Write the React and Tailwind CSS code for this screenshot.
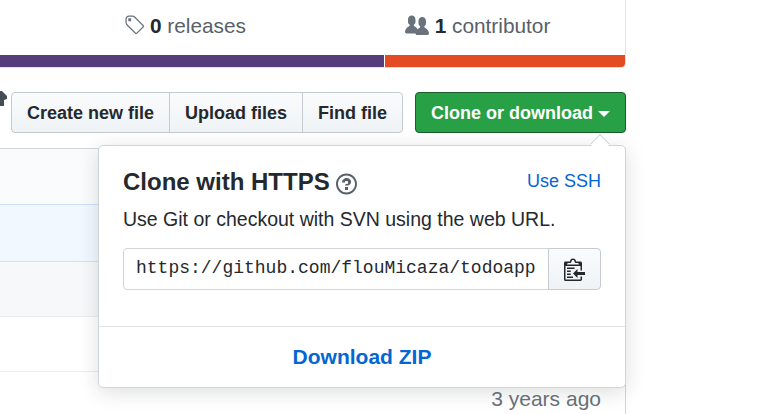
const Tag = ({ className }) => (
  <svg viewBox="0 0 14 16" className={className} fill="currentColor">
    <path fillRule="evenodd" d="M7.73 1.73C7.26 1.26 6.62 1 5.96 1H3.5C2.13 1 1 2.13 1 3.5v2.47c0 .66.27 1.3.73 1.77l6.06 6.06c.39.39 1.02.39 1.41 0l4.59-4.59a.996.996 0 0 0 0-1.41L7.73 1.73zM2.38 7.09c-.31-.3-.47-.7-.47-1.13V3.5c0-.88.72-1.59 1.59-1.59h2.47c.42 0 .83.16 1.13.47l6.14 6.13-4.73 4.73-6.13-6.15zM3.01 3h2v2H3V3h.01z" />
  </svg>
);

const Organization = ({ className }) => (
  <svg viewBox="0 0 16 16" className={className} fill="currentColor">
    <path fillRule="evenodd" d="M16 12.999c0 .439-.45 1-1 1H7.995c-.539 0-.994-.447-.995-.999H1c-.54 0-1-.561-1-1 0-2.634 3-4 3-4s.229-.409 0-1c-.841-.621-1.058-.59-1-3 .058-2.419 1.367-3 2.5-3s2.442.58 2.5 3c.058 2.41-.159 2.379-1 3-.229.59 0 1 0 1s1.549.711 2.42 2.088C9.196 9.369 10 8.999 10 8.999s.229-.409 0-1c-.841-.62-1.058-.59-1-3 .058-2.419 1.367-3 2.5-3s2.437.581 2.495 3c.059 2.41-.158 2.38-1 3-.229.59 0 1 0 1s3.005 1.366 3.005 4z" />
  </svg>
);

const Question = ({ className }) => (
  <svg viewBox="0 0 14 16" className={className} fill="currentColor">
    <path fillRule="evenodd" d="M6 10h2v2H6v-2zm4-3.5C10 8.64 8 9 8 9H6c0-.55.45-1 1-1h.5c.28 0 .5-.22.5-.5v-1c0-.28-.22-.5-.5-.5h-1c-.28 0-.5.22-.5.5V7H4c0-1.5 1.5-3 3-3s3 1 3 2.5zM7 2.3c3.14 0 5.7 2.56 5.7 5.7s-2.56 5.7-5.7 5.7A5.71 5.71 0 0 1 1.3 8c0-3.14 2.56-5.7 5.7-5.7zM7 1C3.14 1 0 4.14 0 8s3.14 7 7 7 7-3.14 7-7-3.14-7-7-7z" />
  </svg>
);

const Clippy = ({ className }) => (
  <svg viewBox="0 0 14 16" className={className} fill="currentColor">
    <path fillRule="evenodd" d="M2 13h4v1H2v-1zm5-6H2v1h5V7zm2 3V8l-3 3 3 3v-2h5v-2H9zM4.5 9H2v1h2.5V9zM2 12h2.5v-1H2v1zm9 1h1v2c-.02.28-.11.52-.3.7-.19.18-.42.28-.7.3H1c-.55 0-1-.45-1-1V4c0-.55.45-1 1-1h3c0-1.11.89-2 2-2 1.11 0 2 .89 2 2h3c.55 0 1 .45 1 1v5h-1V6H1v9h10v-2zM2 5h8c0-.55-.45-1-1-1H8c-.55 0-1-.45-1-1s-.45-1-1-1-1 .45-1 1-.45 1-1 1H3c-.55 0-1 .45-1 1z" />
  </svg>
);

const rows = [
  { cls: 'h-[56px] bg-[#fafbfc] border-t-[#d1d5da] border-r-[#d1d5da]' },
  { cls: 'h-[57px] bg-[#f1f8ff] border-t-[#c8e1ff] border-r-[#c8e1ff]' },
  { cls: 'h-[55px] bg-[#f6f8fa] border-t-[#c8e1ff] border-r-[#d1d5da]' },
  { cls: 'h-[55px] bg-white border-t-[#eaecef] border-r-[#d1d5da]' },
];

export default function App() {
  return (
    <div className="relative h-[414px] w-[766px] overflow-hidden bg-white font-['Liberation_Sans',sans-serif] text-[18px] text-[#24292e]">
      <div className="w-[626px]">
        {/* stats */}
        <div className="overflow-hidden rounded-br-[5px] border-r border-b border-[#e1e4e8]">
          <div className="flex h-[55px] items-center pb-[4px] text-[20.8px] text-[#586069]">
            <div className="flex w-[370px] items-center justify-center gap-[6px]">
              <Tag className="h-[23px] w-[20px] text-[#6a737d]" />
              <span><b className="text-[#24292e]">0</b> releases</span>
            </div>
            <div className="flex flex-1 items-center justify-center gap-[6px] pr-[40px]">
              <Organization className="h-[24px] w-[24px] text-[#6a737d]" />
              <span><b className="text-[#24292e]">1</b> contributor</span>
            </div>
          </div>
          <div className="flex h-[12px] gap-[1px]">
            <div className="w-[384px] bg-[#563d7c]" />
            <div className="flex-1 bg-[#e44b23]" />
          </div>
        </div>

        {/* toolbar */}
        <div className="mt-[24px] flex h-[41px] justify-end">
          <div className="flex font-bold">
            <div className="flex w-[159px] items-center justify-center rounded-l-[4px] border border-[#c6cbd1] bg-linear-to-b from-[#fafbfc] to-[#eff3f6] pt-[2px]">Create new file</div>
            <div className="-ml-px flex w-[134px] items-center justify-center border border-[#c6cbd1] bg-linear-to-b from-[#fafbfc] to-[#eff3f6] pt-[2px]">Upload files</div>
            <div className="-ml-px flex w-[101px] items-center justify-center rounded-r-[4px] border border-[#c6cbd1] bg-linear-to-b from-[#fafbfc] to-[#eff3f6] pt-[2px]">Find file</div>
          </div>
          <div className="ml-[12px] flex w-[211px] items-center justify-center gap-[5px] rounded-[4px] border border-[#1b5c2e] bg-[#28a045] pt-[2px] font-bold text-white">
            Clone or download
            <span className="mt-[1px] h-0 w-0 border-x-[6px] border-t-[6px] border-x-transparent border-t-white" />
          </div>
        </div>

        {/* file rows */}
        <div className="mt-[15px]">
          {rows.map((row, i) => (
            <div key={i} className={`border-t border-r ${row.cls}`} />
          ))}
          <div className="flex h-[60px] justify-end border-t border-r border-t-[#eaecef] border-r-[#d1d5da] pr-[24px] pt-[11px] text-[21px] text-[#6a737d]">3 years ago</div>
        </div>
      </div>

      {/* marker cut off by the left edge */}
      <svg viewBox="0 0 8 18" className="absolute left-0 top-[90px] h-[18px] w-[8px] text-[#444d56]" fill="currentColor">
        <path d="M0 1 L2 1 L7 6 L7 9 L4 10 L4 16 L0 16 Z" />
      </svg>

      {/* clone popover */}
      <div className="absolute left-[98px] top-[145px] h-[243px] w-[528px] rounded-[5px] border border-[#d1d5da] bg-white shadow-[0_4px_20px_rgba(27,31,35,0.15)]">
        <span className="absolute -top-[9px] right-[18px] h-[14px] w-[14px] rotate-45 border-l border-t border-[#d1d5da] bg-white" />
        <div className="relative px-[24px] pt-[21px]">
          <div className="flex items-start justify-between">
            <div className="flex items-center gap-[6px]">
              <h3 className="text-[24px] leading-[30px] font-bold">Clone with HTTPS</h3>
              <Question className="mt-[3px] h-[24px] w-[21px] text-[#586069]" />
            </div>
            <a className="mt-[1px] text-[#0366d6]">Use SSH</a>
          </div>
          <p className="mt-[10px] text-[19.5px] leading-[25px]">Use Git or checkout with SVN using the web URL.</p>
          <div className="mt-[16px] flex h-[42px]">
            <div className="flex flex-1 items-center rounded-l-[4px] border border-[#d1d5da] pb-[2px] pl-[12px] font-['Liberation_Mono',monospace] text-[18px]">
              https://github.com/flouMicaza/todoapp
            </div>
            <div className="-ml-px flex w-[53px] items-center justify-center rounded-r-[4px] border border-[#c6cbd1] bg-linear-to-b from-[#fafbfc] to-[#eff3f6]">
              <Clippy className="h-[24px] w-[21px] text-[#24292e]" />
            </div>
          </div>
        </div>
        <div className="absolute inset-x-0 bottom-0 flex h-[61px] items-center justify-center border-t border-[#e1e4e8] text-[21px] font-bold text-[#0366d6]">
          Download ZIP
        </div>
      </div>
    </div>
  );
}
